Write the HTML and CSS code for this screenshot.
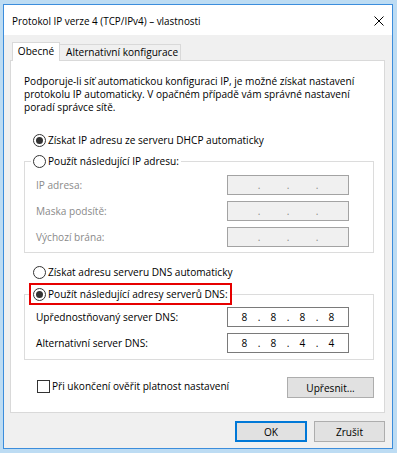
FILE: index.html
```html
<!DOCTYPE html>
<html lang="cs">
<head>
<meta charset="utf-8">
<title>Protokol IP verze 4 (TCP/IPv4) – vlastnosti</title>
<link rel="stylesheet" href="styles.css">
</head>
<body>
<div class="window">
  <div class="titlebar">
    <span class="title">Protokol IP verze 4 (TCP/IPv4) – vlastnosti</span>
    <svg class="close" width="10" height="10" viewBox="0 0 10 10"><path d="M0.5 0.5L9.5 9.5M9.5 0.5L0.5 9.5" stroke="#000" stroke-width="1"/></svg>
  </div>
  <div class="content">
    <div class="tabs">
      <div class="tab active">Obecné</div>
      <div class="tab">Alternativní konfigurace</div>
    </div>
    <div class="panel">
      <p class="intro">Podporuje-li síť automatickou konfiguraci IP, je možné získat nastavení<br>protokolu IP automaticky. V opačném případě vám správné nastavení<br>poradí správce sítě.</p>
      <div class="radio checked top"><span class="dot"></span><span>Získat IP adresu ze serveru DHCP automaticky</span></div>
      <fieldset class="group g1">
        <legend class="lg"><span class="radio"><span class="dot"></span><span>Použít následující IP adresu:</span></span></legend>
        <div class="rows">
          <div class="row disabled"><span>IP adresa:</span><div class="ip off"><span class="seg"></span><span class="sep">.</span><span class="seg"></span><span class="sep">.</span><span class="seg"></span><span class="sep">.</span><span class="seg"></span></div></div>
          <div class="row disabled"><span>Maska podsítě:</span><div class="ip off"><span class="seg"></span><span class="sep">.</span><span class="seg"></span><span class="sep">.</span><span class="seg"></span><span class="sep">.</span><span class="seg"></span></div></div>
          <div class="row disabled"><span>Výchozí brána:</span><div class="ip off"><span class="seg"></span><span class="sep">.</span><span class="seg"></span><span class="sep">.</span><span class="seg"></span><span class="sep">.</span><span class="seg"></span></div></div>
        </div>
      </fieldset>
      <div class="radio dns-auto"><span class="dot"></span><span>Získat adresu serveru DNS automaticky</span></div>
      <fieldset class="group g2">
        <legend class="lg hl"><span class="radio checked"><span class="dot"></span><span>Použít následující adresy serverů DNS:</span></span></legend>
        <div class="rows">
          <div class="row"><span>Upřednostňovaný server DNS:</span><div class="ip"><span class="seg">8</span><span class="sep">.</span><span class="seg">8</span><span class="sep">.</span><span class="seg">8</span><span class="sep">.</span><span class="seg">8</span></div></div>
          <div class="row"><span>Alternativní server DNS:</span><div class="ip"><span class="seg">8</span><span class="sep">.</span><span class="seg">8</span><span class="sep">.</span><span class="seg">4</span><span class="sep">.</span><span class="seg">4</span></div></div>
        </div>
      </fieldset>
      <div class="check-row">
        <div class="check"><span class="box"></span><span>Při ukončení ověřit platnost nastavení</span></div>
        <div class="btn advanced">Upřesnit...</div>
      </div>
    </div>
    <div class="buttons">
      <div class="btn ok">OK</div>
      <div class="btn cancel">Zrušit</div>
    </div>
  </div>
</div>
</body>
</html>
```
FILE: styles.css
```css
* { box-sizing: border-box; }
html, body { margin: 0; }
body {
  width: 397px;
  height: 453px;
  overflow: hidden;
  background: #bddcf3;
  padding: 4px 4px 0 3px;
  font-family: "Open Sans", "Noto Sans", sans-serif;
  font-size: 10.1px;
  color: #000;
}
.window {
  width: 390px;
  height: 445px;
  border: 1px solid #3c8ddc;
  background: #f0f0f0;
  display: flex;
  flex-direction: column;
}
.titlebar {
  height: 30px;
  flex: none;
  background: #fff;
  display: flex;
  align-items: center;
  justify-content: space-between;
  padding: 2px 8px 0 8px;
}
.title { font-size: 9.9px; }
.close { display: block; }
.content {
  flex: 1;
  display: flex;
  flex-direction: column;
  padding: 7px 7px 6px 6px;
}
.tabs {
  display: flex;
  height: 18px;
  padding-left: 2px;
  align-items: flex-start;
}
.tab {
  height: 16px;
  margin-top: 2px;
  margin-left: -1px;
  width: 122px;
  border: 1px solid #d9d9d9;
  border-bottom: none;
  background: #f0f0f0;
  padding-left: 6px;
  line-height: 14px;
  white-space: nowrap;
}
.tab.active {
  width: 48px;
  height: 19px;
  margin-top: 0;
  margin-left: 0;
  background: #fff;
  padding-left: 0;
  text-align: center;
  line-height: 16px;
  position: relative;
  z-index: 1;
}
.panel {
  height: 353px;
  background: #fff;
  border: 1px solid #d9d9d9;
  padding: 14px 10px 0 13px;
}
.intro {
  margin: 0;
  line-height: 13px;
  white-space: nowrap;
}
.radio {
  display: flex;
  align-items: center;
  gap: 2px;
  height: 16px;
  white-space: nowrap;
}
.radio.top { margin: 18px 0 0 9px; }
.radio.dns-auto { margin: 11px 0 0 9px; }
.dot {
  width: 13px;
  height: 13px;
  flex: none;
  border: 1px solid #333;
  border-radius: 50%;
  background: #fff;
  display: flex;
  align-items: center;
  justify-content: center;
}
.radio.checked .dot::after {
  content: "";
  width: 7px;
  height: 7px;
  border-radius: 50%;
  background: #333;
}
.group {
  margin: 5px 0 0;
  padding: 6px 24px 5px 11px;
  border: 1px solid #dcdcdc;
  min-width: 0;
}
.group.g2 {
  margin-top: 3px;
  padding-top: 2px;
  padding-bottom: 6px;
}
.lg {
  padding: 0 2px;
  margin-left: -5px;
}
.lg.hl {
  border: 2px solid #e60000;
  padding: 1px 2px;
  margin-left: -7px;
}
.rows {
  display: flex;
  flex-direction: column;
  gap: 6px;
}
.row {
  display: flex;
  align-items: center;
  justify-content: space-between;
  height: 20px;
}
.row.disabled { color: #8a8a8a; }
.ip {
  width: 122px;
  height: 20px;
  border: 1px solid #7a7a7a;
  background: #fff;
  display: flex;
  align-items: center;
  padding: 0 5px;
  color: #000;
}
.ip.off {
  background: #f0f0f0;
  border-color: #a3a3a3;
  color: #8a8a8a;
}
.seg { width: 23px; text-align: center; }
.sep { width: 6px; text-align: center; }
.check-row {
  display: flex;
  align-items: center;
  justify-content: space-between;
  height: 21px;
  margin-top: 17px;
  padding-left: 13px;
}
.check {
  display: flex;
  align-items: center;
  gap: 2px;
  margin-bottom: 3px;
  white-space: nowrap;
}
.box {
  width: 13px;
  height: 13px;
  border: 1px solid #333;
  background: #fff;
}
.btn {
  height: 21px;
  border: 1px solid #adadad;
  background: #e1e1e1;
  display: flex;
  align-items: center;
  justify-content: center;
}
.btn.advanced { width: 87px; }
.buttons {
  display: flex;
  justify-content: flex-end;
  gap: 7px;
  margin-top: 8px;
}
.btn.ok {
  width: 72px;
  border-color: #0078d7;
  box-shadow: inset 0 0 0 1px #0078d7;
}
.btn.cancel { width: 71px; }
```
